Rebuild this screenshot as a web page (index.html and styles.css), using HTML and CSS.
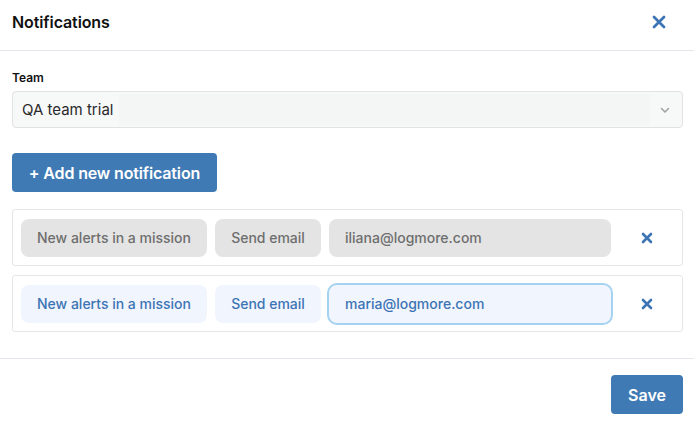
FILE: index.html
```html
<!DOCTYPE html>
<html>
<head>
<meta charset="utf-8">
<link rel="stylesheet" href="styles.css">
</head>
<body>
<div class="modal">
  <div class="header">
    <div class="title">Notifications</div>
    <button class="close" aria-label="Close">
      <svg width="14" height="14" viewBox="0 0 14 14"><path d="M2 2L12 12M12 2L2 12" stroke="#3d74b4" stroke-width="2.8" stroke-linecap="round"/></svg>
    </button>
  </div>
  <div class="body">
    <label class="label">Team</label>
    <div class="select">
      <span class="value">QA team trial</span>
      <span class="filler"></span>
      <svg class="chev" width="10" height="8" viewBox="0 0 10 8"><path d="M1.5 2.5L5 6L8.5 2.5" stroke="#a3a3a3" stroke-width="1.6" fill="none" stroke-linecap="round" stroke-linejoin="round"/></svg>
    </div>
    <button class="add">+ Add new notification</button>
    <div class="rows">
      <div class="row">
        <div class="pill gray w1">New alerts in a mission</div>
        <div class="pill gray w2">Send email</div>
        <div class="pill gray w3 email">iliana@logmore.com</div>
        <div class="remove"><svg width="12" height="12" viewBox="0 0 12 12"><path d="M2 2L10 10M10 2L2 10" stroke="#3d74b4" stroke-width="2.6" stroke-linecap="round"/></svg></div>
      </div>
      <div class="row">
        <div class="pill blue w1">New alerts in a mission</div>
        <div class="pill blue w2">Send email</div>
        <div class="pill blue w3 email focused">maria@logmore.com</div>
        <div class="remove"><svg width="12" height="12" viewBox="0 0 12 12"><path d="M2 2L10 10M10 2L2 10" stroke="#3d74b4" stroke-width="2.6" stroke-linecap="round"/></svg></div>
      </div>
    </div>
  </div>
  <div class="footer">
    <button class="save">Save</button>
  </div>
</div>
</body>
</html>
```
FILE: styles.css
```css
* { box-sizing: border-box; }
html, body { margin: 0; padding: 0; background: #fff; }
body { font-family: Inter, "Noto Sans", sans-serif; color: #111; width: 694px; height: 422px; overflow: hidden; }
.modal { width: 694px; }
.header {
  height: 51px;
  border-bottom: 1px solid #e6e6ec;
  display: flex;
  align-items: center;
  justify-content: space-between;
  padding: 0 28px 0 12px;
}
.title { font-size: 16px; font-weight: 600; color: #111; letter-spacing: -0.1px; margin-top: -7px; }
.close { border: 0; background: none; padding: 0; display: flex; margin-top: -7px; }
.body { padding: 20px 11px 26px 12px; }
.label { display: block; font-size: 12px; font-weight: 600; line-height: 14px; color: #111; }
.select {
  margin-top: 6px;
  height: 37px;
  border: 1px solid #e2e2e2;
  border-radius: 4px;
  background: #f7f8f8;
  display: flex;
  align-items: center;
  padding: 0 12px 0 9px;
}
.value { font-size: 15px; color: #2a2a2a; padding-right: 6px; line-height: 35px; }
.filler { flex: 1; height: 31px; background: #f4f5f5; }
.chev { margin-left: 10px; }
.add {
  margin-top: 25px;
  width: 205px;
  height: 39px;
  border: 0;
  border-radius: 4px;
  background: #3f7ab5;
  color: #fff;
  font-family: Inter, sans-serif;
  font-size: 16px;
  font-weight: 600;
  letter-spacing: -0.15px;
  display: block;
}
.rows { margin-top: 17px; display: flex; flex-direction: column; gap: 9px; }
.row {
  height: 57px;
  border: 1px solid #e6e6ea;
  border-radius: 3px;
  padding: 9px 8px;
  display: flex;
  gap: 8px;
  align-items: center;
}
.pill {
  height: 38px;
  border-radius: 8px;
  display: flex;
  align-items: center;
  justify-content: center;
  font-size: 14px;
  font-weight: 500;
  letter-spacing: 0;
}
.w1 { width: 186px; }
.w2 { width: 106px; }
.w3 { width: 282px; }
.email { justify-content: flex-start; padding-left: 16px; }
.gray { background: #e4e4e4; color: #6e6e6e; }
.blue { background: #f1f5fd; color: #3d74b4; }
.focused { outline: 2.5px solid #a3d2f2; outline-offset: 0; }
.remove { flex: 1; display: flex; justify-content: center; align-items: center; }
.footer { border-top: 1px solid #e6e6ec; padding: 16px 11px 0 0; display: flex; justify-content: flex-end; }
.save {
  width: 72px;
  height: 39px;
  border: 0;
  border-radius: 4px;
  background: #3f7ab5;
  color: #fff;
  font-family: Inter, sans-serif;
  font-size: 16px;
  font-weight: 600;
}
```
